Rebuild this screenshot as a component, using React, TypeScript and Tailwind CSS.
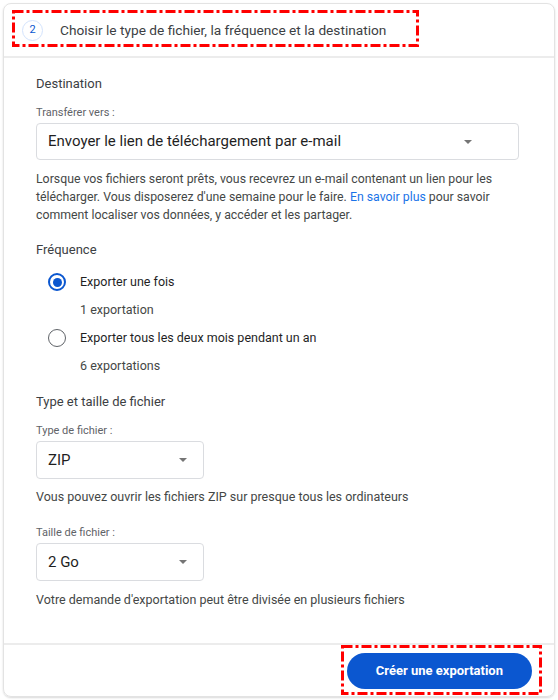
import React from "react";

function Arrow() {
  return <span className="block w-0 h-0 border-x-[4px] border-t-[4px] border-x-transparent border-t-[#757575]" />;
}

function Select({ value, className, textClass }: { value: string; className: string; textClass: string }) {
  return (
    <div className={`flex items-center justify-between rounded-[4px] border border-[#dadce0] bg-white pl-[11px] ${className}`}>
      <span className={`text-[#1f1f1f] ${textClass}`}>{value}</span>
      <Arrow />
    </div>
  );
}

function Radio({ checked, label }: { checked?: boolean; label: string }) {
  return (
    <div className="flex items-center h-[28px] pl-[12px]">
      {checked ? (
        <span className="flex items-center justify-center w-[18px] h-[18px] rounded-full border-2 border-[#0b57d0]">
          <span className="w-[9px] h-[9px] rounded-full bg-[#0b57d0]" />
        </span>
      ) : (
        <span className="w-[18px] h-[18px] rounded-full border-[1.5px] border-[#5f6368]" />
      )}
      <span className="ml-[14px] text-[12.5px] text-[#1f1f1f]">{label}</span>
    </div>
  );
}

function DashBox({ x, y, w, h }: { x: number; y: number; w: number; h: number }) {
  return (
    <svg className="absolute pointer-events-none" style={{ left: x, top: y }} width={w} height={h}>
      <rect x={1.5} y={1.5} width={w - 3} height={h - 3} fill="none" stroke="#ff0000" strokeWidth={3} strokeDasharray="10 3 3 3" />
    </svg>
  );
}

export default function App() {
  return (
    <div className="relative w-[558px] h-[700px] bg-white p-[3px]" style={{ fontFamily: "Roboto, 'Liberation Sans', Arial, sans-serif" }}>
      <div className="flex flex-col h-[694px] rounded-[8px] border border-[#e3e3e3] shadow-[0_1px_2px_rgba(0,0,0,0.15)]">
        <div className="flex items-center h-[54px] pl-[18px] border-b-2 border-[#ececec]">
          <span className="flex items-center justify-center w-[21px] h-[21px] rounded-full border border-[#d3e3fd] text-[11px] text-[#0b57d0]">2</span>
          <span className="ml-[17px] text-[13.7px] text-[#3c4043]">Choisir le type de fichier, la fréquence et la destination</span>
        </div>

        <div className="flex-1 pl-[32px] pr-[35px] pt-[18px]">
          <div className="text-[13px] leading-[16px] text-[#3c4043]">Destination</div>
          <div className="mt-[14px] text-[11px] leading-[14px] text-[#5f6368]">Transférer vers :</div>
          <Select value="Envoyer le lien de téléchargement par e-mail" className="mt-[3px] h-[37px] pr-[46px]" textClass="text-[15px]" />
          <p className="mt-[10px] text-[12.3px] leading-[18px] text-[#444746]">
            Lorsque vos fichiers seront prêts, vous recevrez un e-mail contenant un lien pour les télécharger. Vous disposerez d'une semaine pour le faire.{" "}
            <span className="text-[#1a73e8]">En savoir plus</span> pour savoir comment localiser vos données, y accéder et les partager.
          </p>

          <div className="mt-[18px] text-[13px] leading-[16px] text-[#3c4043]">Fréquence</div>
          <div className="mt-[10px]">
            <Radio checked label="Exporter une fois" />
          </div>
          <div className="mt-[6px] pl-[44px] text-[12.5px] leading-[16px] text-[#444746]">1 exportation</div>
          <div className="mt-[6px]">
            <Radio label="Exporter tous les deux mois pendant un an" />
          </div>
          <div className="mt-[6px] pl-[44px] text-[12.5px] leading-[16px] text-[#444746]">6 exportations</div>

          <div className="mt-[20px] text-[13px] leading-[16px] text-[#3c4043]">Type et taille de fichier</div>
          <div className="mt-[14px] text-[11px] leading-[14px] text-[#5f6368]">Type de fichier :</div>
          <Select value="ZIP" className="mt-[3px] w-[168px] h-[38px] pr-[16px]" textClass="text-[15px]" />
          <div className="mt-[9px] text-[12.5px] leading-[18px] text-[#444746]">Vous pouvez ouvrir les fichiers ZIP sur presque tous les ordinateurs</div>
          <div className="mt-[20px] text-[11px] leading-[14px] text-[#5f6368]">Taille de fichier :</div>
          <Select value="2 Go" className="mt-[3px] w-[168px] h-[38px] pr-[16px]" textClass="text-[15px]" />
          <div className="mt-[10px] text-[12.5px] leading-[18px] text-[#444746]">Votre demande d'exportation peut être divisée en plusieurs fichiers</div>
        </div>

        <div className="flex items-center justify-end h-[53px] pr-[22px] border-t-2 border-[#ececec]">
          <button className="h-[36px] px-[29px] rounded-full bg-[#0b57d0] text-[13px] font-bold text-white">Créer une exportation</button>
        </div>
      </div>

      <DashBox x={12} y={10} w={407} h={37} />
      <DashBox x={341} y={645} w={201} h={50} />
    </div>
  );
}
